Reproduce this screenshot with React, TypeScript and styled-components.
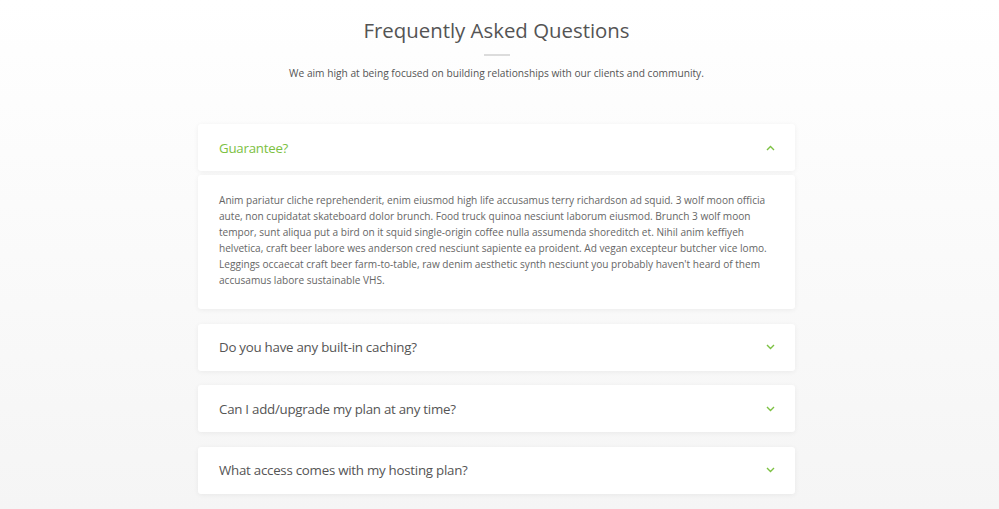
import React from 'react';
import styled, { createGlobalStyle } from 'styled-components';

const GlobalStyle = createGlobalStyle`
  html, body {
    margin: 0;
    padding: 0;
  }
  body {
    font-family: "Open Sans", "Liberation Sans", sans-serif;
    background: linear-gradient(to bottom, #ffffff 0%, #f5f5f5 100%);
    min-height: 509px;
  }
`;

const Section = styled.section`
  display: flex;
  flex-direction: column;
  align-items: center;
  padding: 16px 6px 0 0;
  min-height: 509px;
  box-sizing: border-box;
`;

const Title = styled.h2`
  margin: 0;
  font-size: 20.4px;
  font-weight: 400;
  color: #545454;
  line-height: 28px;
`;

const Divider = styled.div`
  width: 26px;
  height: 2px;
  background: #dcdcdc;
  margin: 10px 0 9px;
`;

const Subtitle = styled.p`
  margin: 0;
  font-size: 10.2px;
  color: #555;
  line-height: 16px;
`;

const List = styled.div`
  width: 597px;
  margin-top: 43px;
  display: flex;
  flex-direction: column;
`;

const Item = styled.div`
  display: flex;
  flex-direction: column;
  margin-bottom: 14.5px;
`;

const Card = styled.div`
  background: #fff;
  border-radius: 3px;
  box-shadow: 0 1px 5px rgba(0, 0, 0, 0.06);
`;

const Header = styled(Card)<{ $open?: boolean }>`
  height: 47px;
  padding: 0 20px 0 21px;
  display: flex;
  align-items: center;
  justify-content: space-between;
  font-size: 13.3px;
  letter-spacing: -0.25px;
  color: ${(p) => (p.$open ? '#7cc142' : '#555')};
  cursor: pointer;
`;

const Body = styled(Card)`
  margin-top: 4px;
  padding: 17px 21px 21px;
  font-size: 10.1px;
  line-height: 16px;
  color: #666;
`;

const Chevron: React.FC<{ up?: boolean }> = ({ up }) => (
  <svg width="9" height="6" viewBox="0 0 9 6">
    <path
      d={up ? 'M1 5 L4.5 1.5 L8 5' : 'M1 1 L4.5 4.5 L8 1'}
      fill="none"
      stroke="#7cc142"
      strokeWidth="1.4"
    />
  </svg>
);

const faqs = [
  {
    q: 'Guarantee?',
    a: "Anim pariatur cliche reprehenderit, enim eiusmod high life accusamus terry richardson ad squid. 3 wolf moon officia aute, non cupidatat skateboard dolor brunch. Food truck quinoa nesciunt laborum eiusmod. Brunch 3 wolf moon tempor, sunt aliqua put a bird on it squid single-origin coffee nulla assumenda shoreditch et. Nihil anim keffiyeh helvetica, craft beer labore wes anderson cred nesciunt sapiente ea proident. Ad vegan excepteur butcher vice lomo. Leggings occaecat craft beer farm-to-table, raw denim aesthetic synth nesciunt you probably haven't heard of them accusamus labore sustainable VHS.",
    open: true,
  },
  { q: 'Do you have any built-in caching?' },
  { q: 'Can I add/upgrade my plan at any time?' },
  { q: 'What access comes with my hosting plan?' },
];

const App: React.FC = () => (
  <>
    <GlobalStyle />
    <Section>
      <Title>Frequently Asked Questions</Title>
      <Divider />
      <Subtitle>We aim high at being focused on building relationships with our clients and community.</Subtitle>
      <List>
        {faqs.map((f) => (
          <Item key={f.q}>
            <Header $open={f.open}>
              <span>{f.q}</span>
              <Chevron up={f.open} />
            </Header>
            {f.open && <Body>{f.a}</Body>}
          </Item>
        ))}
      </List>
    </Section>
  </>
);

export default App;
